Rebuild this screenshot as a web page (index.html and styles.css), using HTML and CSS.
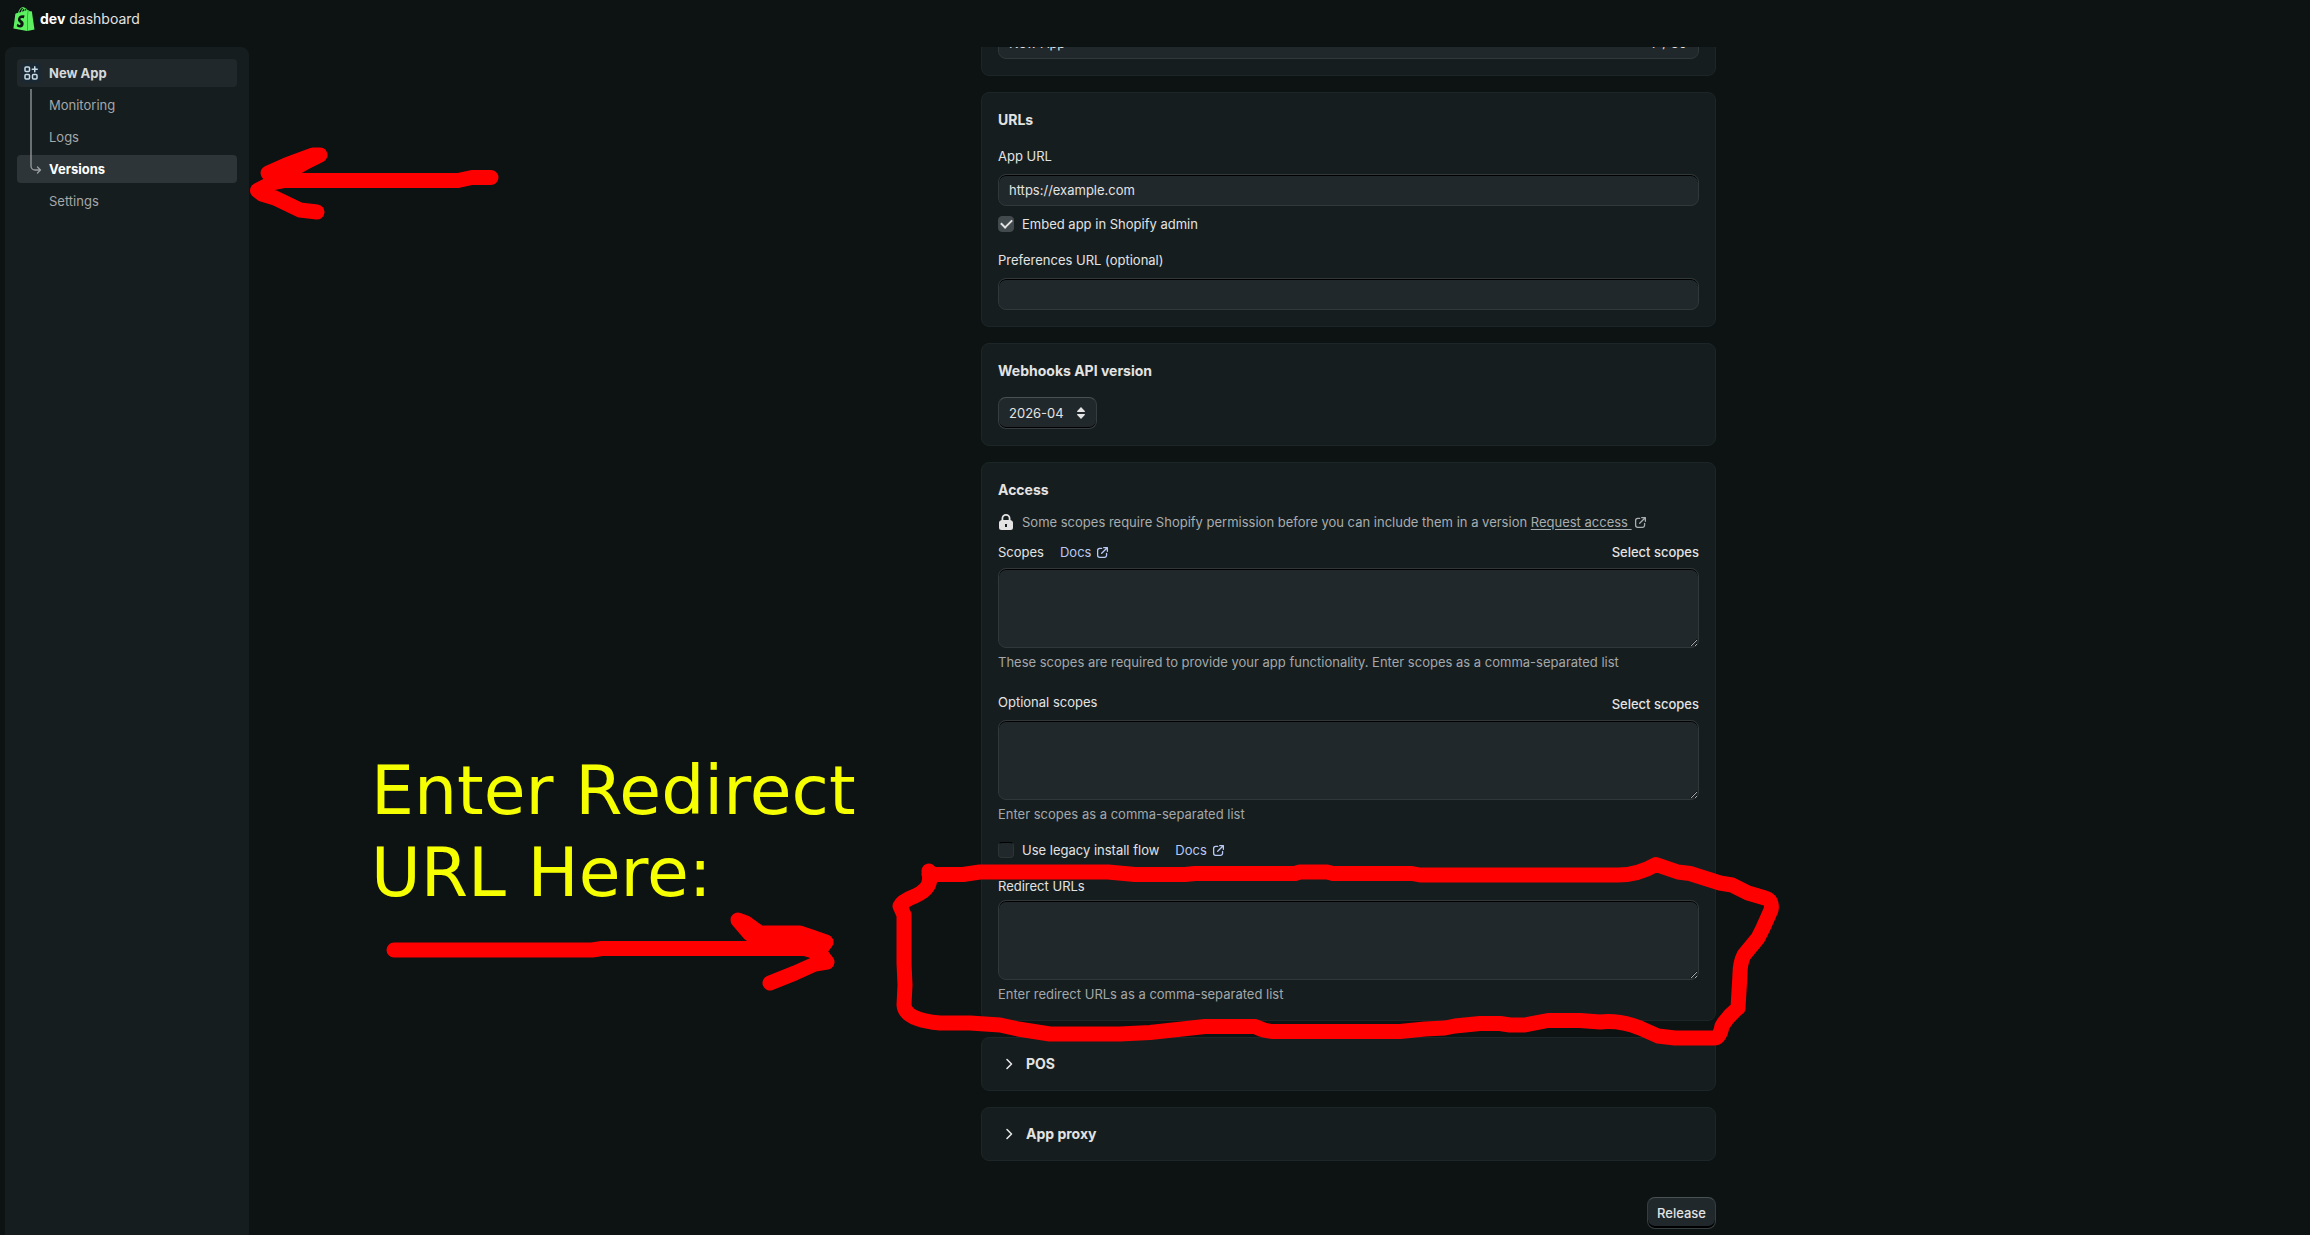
FILE: index.html
```html
<!DOCTYPE html>
<html lang="en">
<head>
    <meta charset="UTF-8">
    <meta name="viewport" content="width=device-width, initial-scale=1.0">
    <title>Dev Dashboard</title>
    <link rel="stylesheet" href="styles.css">
</head>
<body>
    <!-- shared icons -->
    <svg class="sprite" aria-hidden="true">
        <symbol id="icon-external" viewBox="0 0 16 16">
            <path d="M7 3H4.500A2.500 2.500 0 0 0 2 5.500v6A2.500 2.500 0 0 0 4.500 14h6a2.500 2.500 0 0 0 2.500-2.500V9M9.500 2H14v4.500M13.800 2.200 7 9" fill="none" stroke="currentColor" stroke-width="1.600" stroke-linecap="round" stroke-linejoin="round"/>
        </symbol>
        <symbol id="icon-chevron" viewBox="0 0 16 16">
            <path d="m6 3.500 4.500 4.500L6 12.500" fill="none" stroke="currentColor" stroke-width="1.600" stroke-linecap="round" stroke-linejoin="round"/>
        </symbol>
    </svg>

    <header class="topbar">
        <svg class="logo" viewBox="0 0 24 24" aria-hidden="true">
            <path fill="#5cf060" d="M15.337 23.979l7.216-1.561s-2.604-17.613-2.625-17.730c-.018-.116-.114-.192-.211-.192s-1.929-.136-1.929-.136-1.275-1.274-1.439-1.411c-.045-.037-.075-.057-.121-.074l-.914 21.104h.023zM11.710 11.305s-.810-.424-1.774-.424c-1.447 0-1.504.906-1.504 1.141 0 1.232 3.240 1.715 3.240 4.629 0 2.295-1.440 3.760-3.406 3.760-2.354 0-3.540-1.465-3.540-1.465l.646-2.086s1.245 1.066 2.280 1.066c.675 0 .975-.545.975-.932 0-1.619-2.654-1.694-2.654-4.359-.034-2.237 1.571-4.416 4.827-4.416 1.257 0 1.875.361 1.875.361l-.945 2.715-.020.010zM11.170.830c.136 0 .271.038.405.135-.984.465-2.064 1.639-2.508 3.992-.656.213-1.293.405-1.889.578C7.697 3.750 8.951.840 11.170.840V.830zm1.235 2.949v.135c-.754.232-1.583.484-2.394.736.466-1.777 1.333-2.645 2.085-2.971.193.501.309 1.176.309 2.100zm.539-2.234c.694.074 1.141.867 1.429 1.755-.349.114-.735.231-1.158.366v-.252c0-.752-.096-1.371-.271-1.871v.002zm2.992 1.289c-.020 0-.060.021-.078.021s-.289.075-.714.210c-.423-1.233-1.176-2.370-2.508-2.370h-.115C12.135.209 11.669 0 11.265 0 8.159 0 6.675 3.877 6.210 5.846c-1.194.365-2.063.636-2.160.674-.675.213-.694.232-.772.870-.075.462-1.830 14.063-1.830 14.063L15.009 24l.927-21.166z"/>
        </svg>
        <span class="brand"><b>dev</b> dashboard</span>
    </header>

    <div class="layout">
        <nav class="sidebar">
            <a href="#" class="nav-item nav-app">
                <span class="nav-icon">
                    <svg viewBox="0 0 16 16" width="16" height="16" aria-hidden="true">
                        <g fill="none" stroke="currentColor" stroke-width="1.500" stroke-linecap="round" stroke-linejoin="round">
                            <rect x="2" y="2" width="4.500" height="4.500" rx="1"/>
                            <rect x="2" y="9.500" width="4.500" height="4.500" rx="1"/>
                            <rect x="9.500" y="9.500" width="4.500" height="4.500" rx="1"/>
                            <path d="M11.750 1.750v5M9.250 4.250h5"/>
                        </g>
                    </svg>
                </span>
                New App
            </a>
            <a href="#" class="nav-item">Monitoring</a>
            <a href="#" class="nav-item">Logs</a>
            <a href="#" class="nav-item active">
                <svg class="nav-branch" viewBox="0 0 12 86" width="12" height="86" aria-hidden="true">
                    <path d="M1 0v77a4 4 0 0 0 4 4h5M7.500 78l3 3-3 3" fill="none" stroke="#9a9fa1" stroke-width="1.300" stroke-linecap="round" stroke-linejoin="round"/>
                </svg>
                Versions
            </a>
            <a href="#" class="nav-item">Settings</a>
        </nav>

        <main class="content">
            <form class="form">
                <section class="card">
                    <div class="counted">
                        <input type="text" aria-label="App name" value="New App">
                        <span>7 / 30</span>
                    </div>
                </section>

                <section class="card">
                    <h2>URLs</h2>
                    <label for="appUrl">App URL</label>
                    <input type="text" id="appUrl" value="https://example.com">
                    <div class="check-row">
                        <input type="checkbox" id="embed" checked>
                        <label for="embed">Embed app in Shopify admin</label>
                    </div>
                    <label for="prefUrl">Preferences URL (optional)</label>
                    <input type="text" id="prefUrl">
                </section>

                <section class="card">
                    <h2>Webhooks API version</h2>
                    <div class="select-box">
                        <select aria-label="Webhooks API version">
                            <option>2026-04</option>
                        </select>
                        <svg viewBox="0 0 8 12" width="8" height="12" aria-hidden="true">
                            <path d="M4 0 8 4.300Q8 5 7.400 5H.6Q0 5 0 4.300zM4 12 8 7.700Q8 7 7.400 7H.6Q0 7 0 7.700z" fill="currentColor"/>
                        </svg>
                    </div>
                </section>

                <section class="card access">
                    <h2>Access</h2>
                    <p class="notice">
                        <svg viewBox="0 0 16 16" width="16" height="16" aria-hidden="true">
                            <path fill="#e3e3e3" fill-rule="evenodd" d="M3.500 6V4.500a4.500 4.500 0 0 1 9 0V6q2.500.5 2.500 2.500v5a2.500 2.500 0 0 1-2.500 2.500h-9A2.500 2.500 0 0 1 1 13.500v-5Q1 6.500 3.500 6zM5.300 6h5.400V4.500a2.700 2.700 0 0 0-5.400 0zM7 10v3h2v-3z"/>
                        </svg>
                        <span>Some scopes require Shopify permission before you can include them in a version <a href="#" class="plain-link">Request access&nbsp;</a></span>
                        <svg class="external" aria-hidden="true"><use href="#icon-external"/></svg>
                    </p>

                    <div class="field-head">
                        <label for="scopes">Scopes</label>
                        <a href="#" class="docs">Docs <svg class="external" aria-hidden="true"><use href="#icon-external"/></svg></a>
                        <button type="button" class="text-button">Select scopes</button>
                    </div>
                    <textarea id="scopes"></textarea>
                    <p class="help">These scopes are required to provide your app functionality. Enter scopes as a comma-separated list</p>

                    <div class="field-head optional">
                        <label for="optScopes">Optional scopes</label>
                        <button type="button" class="text-button">Select scopes</button>
                    </div>
                    <textarea id="optScopes"></textarea>
                    <p class="help">Enter scopes as a comma-separated list</p>

                    <div class="check-row">
                        <input type="checkbox" id="legacy">
                        <label for="legacy">Use legacy install flow</label>
                        <a href="#" class="docs">Docs <svg class="external" aria-hidden="true"><use href="#icon-external"/></svg></a>
                    </div>

                    <label for="redirects">Redirect URLs</label>
                    <textarea id="redirects"></textarea>
                    <p class="help">Enter redirect URLs as a comma-separated list</p>
                </section>

                <section class="card collapsed">
                    <button type="button"><svg aria-hidden="true"><use href="#icon-chevron"/></svg>POS</button>
                </section>

                <section class="card collapsed">
                    <button type="button"><svg aria-hidden="true"><use href="#icon-chevron"/></svg>App proxy</button>
                </section>

                <div class="actions">
                    <button type="button" class="release">Release</button>
                </div>
            </form>
        </main>
    </div>

    <!-- hand-drawn notes over the page -->
    <svg class="marks" aria-hidden="true">
        <g fill="none" stroke="#ff0000" stroke-width="15" stroke-linecap="round" stroke-linejoin="round">
            <path d="M491 177.500 472 177.500 458 180.500H285L272 183 257.500 190.500 262 194 275 198 300 210 317 212"/>
            <path fill="#ff0000" d="M320 155 313 155 302 159 286 165 268 173 275 177 292 170 306 162z"/>
            <path d="M394 950H592L602 948.500H805L820 953 827 962 815 964 795 973 780 979 770 983"/>
            <path fill="#ff0000" d="M738 920 746 923 760 933H800L812 937 826 942 820 950 802 946 750 934z"/>
            <path d="M929 871 930 874.500H963L980 872H1108L1135 874.500H1185L1195 873.500H1295L1300 872H1327L1333 873.500H1412L1420 875H1618Q1638 875 1656 864.500L1678 872 1690 873.500 1720 883 1732 885 1748 893 1765 898Q1773 900 1771 910L1763 928 1758 938 1744 955Q1740 963 1740 974L1738 1008Q1728 1016 1722 1026 1720 1038 1714 1038H1675L1658 1036 1640 1028Q1620 1020 1600 1022L1580 1020.500H1548L1525 1025H1510L1500 1023.500H1480L1455 1026 1445 1028 1425 1029 1400 1031.500H1273Q1264 1031 1255 1026.500H1205L1150 1032.500 1120 1034H1050L1018 1029 1000 1025 970 1023H940Q905 1020 904 1005L905 985 904 963V915L900 906Q902 901 915 896 933 888 929 874"/>
        </g>
    </svg>
    <div class="note">Enter Redirect<br>URL Here:</div>
</body>
</html>
```

FILE: styles.css
```css
* {
    box-sizing: border-box;
}

body {
    margin: 0;
    height: 100vh;
    display: flex;
    flex-direction: column;
    overflow: hidden;
    position: relative;
    background: #0d1212;
    color: #e3e3e3;
    font-family: Inter, "Liberation Sans", sans-serif;
    font-size: 13px;
    line-height: 20px;
}

a {
    color: inherit;
    text-decoration: none;
}

h2,
p {
    margin: 0;
}

.sprite {
    position: absolute;
    width: 0;
    height: 0;
}

.topbar {
    display: flex;
    align-items: center;
    gap: 4px;
    height: 47px;
    padding: 0 12px 9px;
    flex: none;
}

.logo {
    width: 24px;
    height: 24px;
}

.brand {
    font-size: 14px;
}

.brand b {
    color: #fff;
}

.layout {
    display: flex;
    flex: 1;
    min-height: 0;
    padding-left: 5px;
}

/* Sidebar */
.sidebar {
    display: flex;
    flex-direction: column;
    gap: 4px;
    width: 244px;
    flex: none;
    padding: 12px;
    background: #161d1f;
    border-radius: 8px 8px 0 0;
}

.nav-item {
    position: relative;
    padding: 4px 0 4px 32px;
    border-radius: 4px;
    color: #a3a8aa;
}

.nav-app {
    display: flex;
    align-items: center;
    gap: 8px;
    padding-left: 4px;
    background: #21282b;
    color: #d6d9da;
    font-weight: 700;
}

.nav-icon {
    display: flex;
    padding: 2px;
    border-radius: 4px;
    background: #1a2833;
    color: #c9dbe8;
}

.nav-item.active {
    background: #2e3538;
    color: #fff;
    font-weight: 700;
}

.nav-branch {
    position: absolute;
    left: 13px;
    bottom: 8px;
}

/* Form, scrolled to its end */
.content {
    display: flex;
    flex: 1;
    flex-direction: column;
    justify-content: flex-end;
    align-items: center;
    overflow: hidden;
    padding: 0 0 6px 138px;
}

.form {
    display: flex;
    flex-direction: column;
    gap: 16px;
    flex: none;
    width: 100%;
    max-width: 735px;
}

.card {
    display: flex;
    flex-direction: column;
    gap: 8px;
    padding: 16px;
    background: #161d1f;
    border: 1px solid #1d2627;
    border-radius: 8px;
}

.card h2 {
    margin-bottom: 8px;
    font-size: 14px;
    line-height: 21px;
    font-weight: 700;
}

input[type="text"],
textarea {
    display: block;
    width: 100%;
    height: 32px;
    padding: 0 10px;
    background: #21282b;
    border: 1px solid #30383a;
    border-radius: 8px;
    box-shadow: inset 0 1px 0 #000;
    color: #e3e3e3;
    font: inherit;
}

textarea {
    height: 80px;
    color-scheme: dark;
    resize: vertical;
}

.counted {
    display: grid;
    align-items: center;
}

.counted > * {
    grid-area: 1 / 1;
}

.counted span {
    justify-self: end;
    padding-right: 12px;
}

.check-row {
    display: flex;
    align-items: center;
    gap: 8px;
    margin-bottom: 8px;
}

input[type="checkbox"] {
    appearance: none;
    width: 16px;
    height: 16px;
    margin: 0;
    background: #21282b;
    border: 1px solid #2c3436;
    border-top-color: #000;
    border-radius: 4px;
}

input[type="checkbox"]:checked {
    display: grid;
    place-items: center;
    background: #424a4d;
    border-color: #424a4d;
}

input[type="checkbox"]:checked::after {
    content: "";
    width: 9px;
    height: 5px;
    margin-bottom: 3px;
    border: solid #e3e3e3;
    border-width: 0 0 2px 2px;
    transform: rotate(-45deg);
}

.select-box {
    display: flex;
    align-items: center;
    align-self: flex-start;
}

.select-box select {
    appearance: none;
    height: 32px;
    width: 99px;
    padding: 0 10px 1px;
    background: #21282b;
    border: 1px solid #353d40;
    border-top-color: #495153;
    border-radius: 8px;
    box-shadow: inset 0 -1px 0 #000;
    color: #e3e3e3;
    font: inherit;
}

.select-box svg {
    margin-left: -20px;
    pointer-events: none;
}

/* Access card */
.access {
    gap: 4px;
}

.notice {
    display: flex;
    align-items: center;
    gap: 8px;
    color: #a8adaf;
}

.external {
    width: 13px;
    height: 13px;
    flex: none;
}

.notice .external {
    margin-left: -6px;
}

.plain-link {
    text-decoration: underline;
    text-underline-offset: 2px;
}

.field-head {
    display: flex;
    align-items: center;
    gap: 16px;
    height: 24px;
    margin-top: 4px;
}

.field-head.optional {
    height: 28px;
    margin-top: 12px;
}

.docs {
    display: inline-flex;
    align-items: center;
    gap: 5px;
    color: #b8c9f5;
}

.text-button {
    margin-left: auto;
    padding: 0;
    background: none;
    border: 0;
    color: #e3e3e3;
    font: inherit;
    font-weight: 500;
    cursor: pointer;
}

.optional .text-button {
    align-self: flex-end;
    padding-bottom: 2px;
}

.help {
    color: #a3a8aa;
}

.access .check-row {
    margin: 12px 0;
}

.check-row .docs {
    margin-left: 8px;
}

/* Collapsed cards */
.collapsed button {
    display: flex;
    align-items: center;
    gap: 9px;
    padding: 0 3px;
    background: none;
    border: 0;
    color: #e3e3e3;
    font: inherit;
    font-size: 14px;
    font-weight: 700;
    cursor: pointer;
}

.collapsed svg {
    width: 16px;
    height: 16px;
}

.actions {
    display: flex;
    justify-content: flex-end;
    margin-top: 20px;
}

.release {
    height: 32px;
    padding: 0 9px 1px;
    background: #21282b;
    border: 1px solid #353d40;
    border-top-color: #495153;
    border-radius: 8px;
    box-shadow: inset 0 -2px 0 #000;
    color: #e3e3e3;
    font: inherit;
    font-weight: 500;
    cursor: pointer;
}

/* Notes */
.marks {
    position: absolute;
    top: 0;
    left: 0;
    width: 100%;
    height: 100%;
    pointer-events: none;
}

.note {
    position: absolute;
    top: 750px;
    left: 371px;
    color: #f6ff00;
    font-family: "DejaVu Sans", sans-serif;
    font-size: 68px;
    line-height: 82px;
    pointer-events: none;
}
```
